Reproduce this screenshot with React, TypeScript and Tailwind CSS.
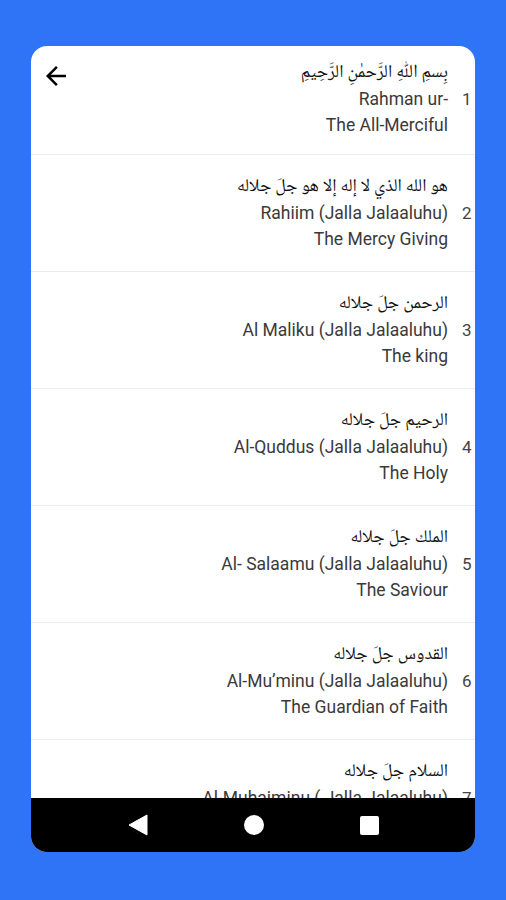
import { ReactNode } from 'react';

interface NameItem {
    n: number;
    arabic: string;
    name: string;
    meaning: string;
}

const names: NameItem[] = [
    { n: 1, arabic: 'بِسمِ اللّٰهِ الرَّحمٰنِ الرَّحِيمِ', name: 'Rahman ur-', meaning: 'The All-Merciful' },
    { n: 2, arabic: 'هو الله الذي لا إله إلا هو جلَ جلاله', name: 'Rahiim (Jalla Jalaaluhu)', meaning: 'The Mercy Giving' },
    { n: 3, arabic: 'الرحمن جلَ جلاله', name: 'Al Maliku (Jalla Jalaaluhu)', meaning: 'The king' },
    { n: 4, arabic: 'الرحيم جلَ جلاله', name: 'Al-Quddus (Jalla Jalaaluhu)', meaning: 'The Holy' },
    { n: 5, arabic: 'الملك جلَ جلاله', name: 'Al- Salaamu (Jalla Jalaaluhu)', meaning: 'The Saviour' },
    { n: 6, arabic: 'القدوس جلَ جلاله', name: 'Al-Mu’minu (Jalla Jalaaluhu)', meaning: 'The Guardian of Faith' },
    { n: 7, arabic: 'السلام جلَ جلاله', name: 'Al-Muhaiminu ( Jalla Jalaaluhu)', meaning: 'The Protector' },
];

const Row = ({ item, first }: { item: NameItem; first?: boolean }): ReactNode => (
    <div
        className={
            'flex justify-end border-b border-[#ececec] ' +
            (first ? 'pt-[14px] pb-[16px]' : 'pt-[19px] pb-[19px]')
        }
    >
        <div className="flex flex-col items-end text-right">
            <div
                dir="rtl"
                className="h-[26px] leading-[26px] text-[18px] text-[#111]"
                style={{ fontFamily: '"Noto Naskh Arabic", "DejaVu Sans", sans-serif' }}
            >
                {item.arabic}
            </div>
            <div className="h-[26px] leading-[26px] text-[17.5px] text-[#3a3a3a] whitespace-nowrap font-['Roboto',sans-serif]">
                {item.name}
            </div>
            <div className="h-[26px] leading-[26px] text-[17.5px] text-[#3a3a3a] whitespace-nowrap font-['Roboto',sans-serif]">
                {item.meaning}
            </div>
        </div>
        <div className="w-[27px] pt-[26px] pl-[14px] leading-[26px] text-[17px] text-[#444] font-['Roboto',sans-serif]">
            {item.n}
        </div>
    </div>
);

export default function App() {
    return (
        <div className="w-[506px] h-[900px] bg-[#2f74f6] pt-[46px] px-[31px]">
            <div className="relative flex flex-col h-[806px] w-[444px] rounded-[16px] bg-white overflow-hidden">
                <div className="flex-1 overflow-hidden">
                    {names.map((item, i) => (
                        <Row key={item.n} item={item} first={i === 0} />
                    ))}
                </div>

                {/* back button */}
                <button className="absolute left-[10px] top-[15px] w-[30px] h-[30px] text-black">
                    <svg viewBox="0 0 24 24" width="30" height="30" fill="currentColor">
                        <path d="M20 11H7.83l5.59-5.59L12 4l-8 8 8 8 1.41-1.41L7.83 13H20v-2z" />
                    </svg>
                </button>

                {/* system nav bar */}
                <div className="h-[54px] bg-black flex items-center justify-center gap-[96px] shrink-0">
                    <svg width="20" height="22" viewBox="0 0 20 22">
                        <path d="M19 1 L1 11 L19 21 Z" fill="white" stroke="white" strokeWidth="1" strokeLinejoin="round" />
                    </svg>
                    <div className="w-[20px] h-[20px] rounded-full bg-white" />
                    <div className="w-[19px] h-[19px] rounded-[2px] bg-white" />
                </div>
            </div>
        </div>
    );
}
